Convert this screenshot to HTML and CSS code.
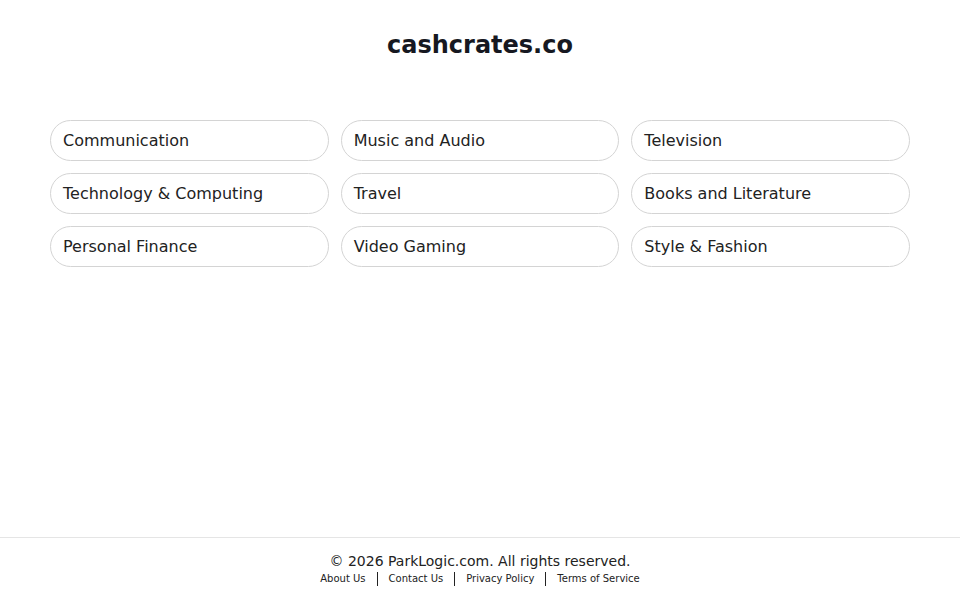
FILE: index.html
```html
<!DOCTYPE html>
<html lang="en">
<head>
<meta charset="utf-8">
<title>cashcrates.co</title>
<link rel="stylesheet" href="styles.css">
</head>
<body>
<div class="page">
  <main class="main">
    <h1 class="title">cashcrates.co</h1>
    <div class="grid">
      <a class="pill" href="#">Communication</a>
      <a class="pill" href="#">Music and Audio</a>
      <a class="pill" href="#">Television</a>
      <a class="pill" href="#">Technology &amp; Computing</a>
      <a class="pill" href="#">Travel</a>
      <a class="pill" href="#">Books and Literature</a>
      <a class="pill" href="#">Personal Finance</a>
      <a class="pill" href="#">Video Gaming</a>
      <a class="pill" href="#">Style &amp; Fashion</a>
    </div>
  </main>
  <footer class="footer">
    <div class="copy">© 2026 ParkLogic.com. All rights reserved.</div>
    <div class="links">
      <a href="#">About Us</a>
      <span class="sep"></span>
      <a href="#">Contact Us</a>
      <span class="sep"></span>
      <a href="#">Privacy Policy</a>
      <span class="sep"></span>
      <a href="#">Terms of Service</a>
    </div>
  </footer>
</div>
</body>
</html>
```

FILE: styles.css
```css
html, body {
  margin: 0;
  padding: 0;
  background: #ffffff;
}
body {
  font-family: "DejaVu Sans", Verdana, sans-serif;
  color: #1f1f1f;
}
.page {
  height: 600px;
  display: flex;
  flex-direction: column;
}
.main {
  flex: 1;
  padding: 0 50px;
}
.title {
  margin: 30px 0 0;
  text-align: center;
  font-size: 24px;
  line-height: 30px;
  font-weight: bold;
  color: #161821;
}
.grid {
  margin-top: 60px;
  display: grid;
  grid-template-columns: repeat(3, 1fr);
  gap: 12px 12px;
}
.pill {
  display: flex;
  align-items: center;
  height: 39px;
  padding: 0 12px;
  border: 1px solid #d4d4d4;
  border-radius: 21px;
  font-size: 16px;
  color: #222222;
  text-decoration: none;
  box-sizing: content-box;
}
.footer {
  border-top: 1px solid #e5e5e5;
  height: 63px;
  text-align: center;
  padding-top: 14px;
  box-sizing: border-box;
}
.copy {
  font-size: 14px;
  line-height: 18px;
  color: #222222;
}
.links {
  display: flex;
  justify-content: center;
  align-items: center;
  gap: 11px;
  margin-top: 2px;
}
.links a {
  font-size: 10px;
  line-height: 14px;
  color: #222222;
  text-decoration: none;
}
.sep {
  width: 1px;
  height: 14px;
  background: #222222;
}
```
